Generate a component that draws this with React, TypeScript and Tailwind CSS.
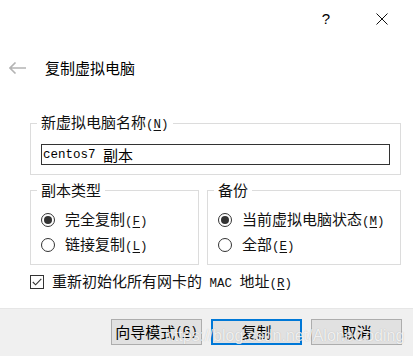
const cjk = { fontFamily: '"Noto Sans CJK SC", "Noto Sans", sans-serif' };
const mono = { fontFamily: '"Liberation Mono", "Noto Sans CJK SC", monospace' };

function Key({ k }: { k: string }) {
  return (
    <span className="text-[12.5px]" style={mono}>
      (<span className="underline underline-offset-2">{k}</span>)
    </span>
  );
}

function Radio({ checked, label, k }: { checked?: boolean; label: string; k: string }) {
  return (
    <div className="flex h-5 items-center">
      <span className="flex h-[14px] w-[14px] items-center justify-center rounded-full border border-[#333] bg-white">
        {checked && <span className="h-[8px] w-[8px] rounded-full bg-[#333]" />}
      </span>
      <span className="ml-[10px] text-[15px] leading-5 text-[#111]">
        {label}
        <Key k={k} />
      </span>
    </div>
  );
}

function Button({ label, k, primary }: { label: string; k?: string; primary?: boolean }) {
  return (
    <button
      className={
        'flex h-[26px] w-[91px] items-center justify-center bg-[#e1e1e1] text-[15px] text-black ' +
        (primary ? 'border-2 border-[#0078d7]' : 'border border-[#adadad]')
      }
      style={cjk}
    >
      {label}
      {k && <Key k={k} />}
    </button>
  );
}

export default function App() {
  return (
    <div className="flex h-[356px] w-[413px] flex-col overflow-hidden bg-white text-black" style={cjk}>
      {/* caption */}
      <div className="flex h-[38px] items-center justify-end gap-[46px] pr-[25px]">
        <span className="text-[15px] text-black" style={{ fontFamily: '"Liberation Sans", sans-serif' }}>
          ?
        </span>
        <svg width="12" height="12" viewBox="0 0 12 12">
          <path d="M0.5 0.5 L11.5 11.5 M11.5 0.5 L0.5 11.5" stroke="#111" strokeWidth="1" />
        </svg>
      </div>

      {/* title */}
      <div className="mt-5 flex h-5 items-center pl-[9px]">
        <svg width="17" height="12" viewBox="0 0 17 12">
          <path d="M1 6 H17 M6.5 0.5 L1 6 L6.5 11.5" stroke="#b4b4b4" strokeWidth="1.6" fill="none" />
        </svg>
        <span className="ml-[19px] text-[15px] leading-5 text-black">复制虚拟电脑</span>
      </div>

      <div className="mt-[34px] flex flex-col pl-[30px] pr-[12px]">
        <fieldset className="border border-[#dcdcdc] px-[10px] pb-[9px]">
          <legend className="-ml-1 px-1 text-[15px] leading-5 text-[#111]">
            新虚拟电脑名称
            <Key k="N" />
          </legend>
          <div className="mt-[9px] flex h-[21px] items-center border border-[#333] px-[1px] text-[15px] leading-5">
            <span className="text-[12.5px]" style={mono}>
              centos7&nbsp;
            </span>
            副本
          </div>
        </fieldset>

        <div className="mt-[5px] flex gap-2">
          <fieldset className="w-[169px] border border-[#dcdcdc] px-[10px] pb-[9px]">
            <legend className="-ml-1 px-1 text-[15px] leading-5 text-[#111]">副本类型</legend>
            <div className="mt-[10px] flex flex-col gap-[5px]">
              <Radio checked label="完全复制" k="F" />
              <Radio label="链接复制" k="L" />
            </div>
          </fieldset>
          <fieldset className="flex-1 border border-[#dcdcdc] px-[10px] pb-[9px]">
            <legend className="-ml-1 px-1 text-[15px] leading-5 text-[#111]">备份</legend>
            <div className="mt-[10px] flex flex-col gap-[5px]">
              <Radio checked label="当前虚拟电脑状态" k="M" />
              <Radio label="全部" k="E" />
            </div>
          </fieldset>
        </div>

        <div className="mt-[7px] flex h-5 items-center">
          <span className="flex h-[14px] w-[14px] items-center justify-center border border-[#333] bg-white">
            <svg width="10" height="8" viewBox="0 0 10 8">
              <path d="M0.8 4 L3.6 6.8 L9.3 0.8" stroke="#333" strokeWidth="1.1" fill="none" />
            </svg>
          </span>
          <span className="ml-2 text-[15px] leading-5 text-[#111]">
            重新初始化所有网卡的
            <span className="text-[12.5px]" style={mono}>
              &nbsp;MAC&nbsp;
            </span>
            地址
            <Key k="R" />
          </span>
        </div>
      </div>

      {/* footer */}
      <div className="relative mt-auto flex h-[48px] items-start justify-end gap-[9px] border-t border-[#e6e6e6] bg-[#f0f0f0] pr-[11px] pt-[10px]">
        <Button label="向导模式" k="G" />
        <Button label="复制" primary />
        <Button label="取消" />
        <span
          className="pointer-events-none absolute left-[165px] top-[17px] whitespace-nowrap text-[16px] leading-5 text-white/80"
          style={{
            fontFamily: '"Liberation Sans", sans-serif',
            textShadow: '0 0 1px rgba(0,0,0,0.25)',
          }}
        >
          https://blog.csdn.net/AloneCoding
        </span>
      </div>
    </div>
  );
}
